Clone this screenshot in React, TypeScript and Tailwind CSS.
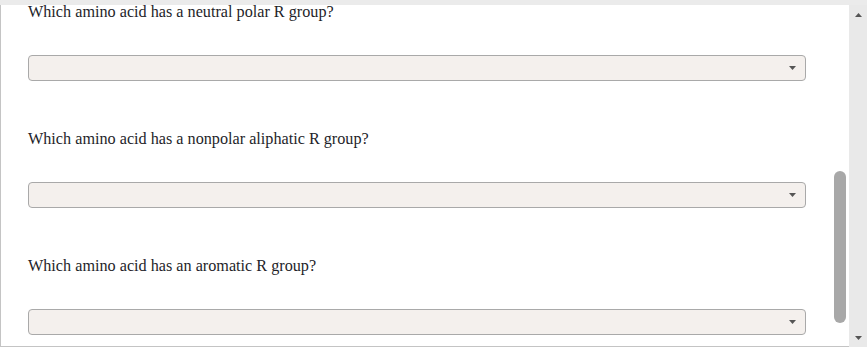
import React from 'react'

const questions = [
  'Which amino acid has a neutral polar R group?',
  'Which amino acid has a nonpolar aliphatic R group?',
  'Which amino acid has an aromatic R group?',
]

function Caret({ up = false }: { up?: boolean }) {
  return (
    <svg width="7" height="4" viewBox="0 0 7 4" className="block">
      {up ? <path d="M0 4 L3.5 0 L7 4 Z" fill="#555" /> : <path d="M0 0 L7 0 L3.5 4 Z" fill="#555" />}
    </svg>
  )
}

function Question({ text, first }: { text: string; first?: boolean }) {
  return (
    <div className={first ? '-mt-[4px]' : 'pt-[47px]'}>
      <p className="pt-[1px] text-[16.2px] leading-[20px] text-[#1f1f2a]">{text}</p>
      <button
        type="button"
        className="mt-[33px] flex h-[26px] w-[778px] items-center justify-end rounded-[4px] border border-[#a9a9a9] bg-[#f4f0ed] pr-[9px]"
      >
        <Caret />
      </button>
    </div>
  )
}

export default function App() {
  return (
    <div className="relative flex h-[350px] w-[867px] flex-col overflow-hidden bg-white font-['Liberation_Serif',serif]">
      <div className="relative z-10 h-[5px] shrink-0 bg-[#ebebeb]" />
      <div className="flex min-h-0 flex-1">
        {/* panel */}
        <div className="flex h-[342px] flex-1 border-b border-l border-[#c4c4c4]">
          <div className="flex-1 pl-[27px]">
            {questions.map((q, i) => (
              <Question key={q} text={q} first={i === 0} />
            ))}
          </div>
          <div className="w-[15px] pt-[166px]">
            <div className="h-[152px] w-[12px] rounded-[6px] bg-[#a8a8a8]" />
          </div>
        </div>
        {/* scrollbar track */}
        <div className="flex h-[342px] w-[18px] flex-col items-center justify-between bg-[#e9e9e9] pb-[7px] pt-[8px]">
          <Caret up />
          <Caret />
        </div>
      </div>
    </div>
  )
}
